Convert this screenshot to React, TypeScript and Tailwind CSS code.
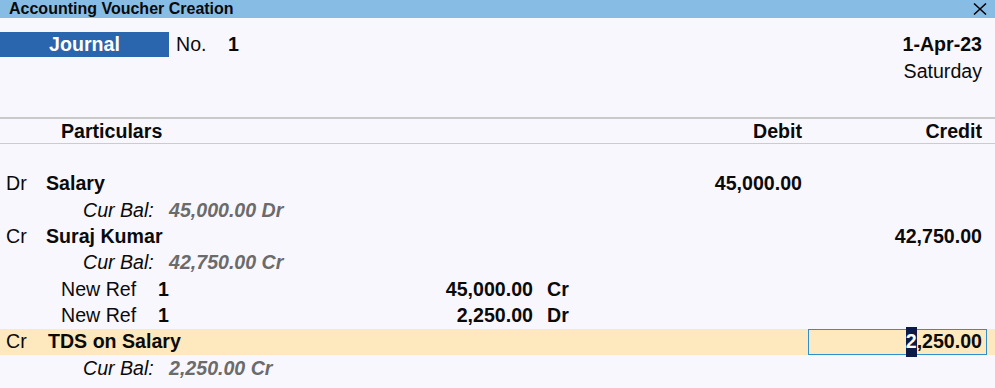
import React from 'react';

const font = { fontFamily: '"Liberation Sans", Arial, sans-serif' };

const Row: React.FC<{ className?: string; children: React.ReactNode }> = ({ className = '', children }) => (
  <div className={`flex items-center h-[26.3px] ${className}`}>{children}</div>
);

const LedgerRow: React.FC<{ side: string; name: string; debit?: string; credit?: string }> = ({ side, name, debit, credit }) => (
  <Row>
    <span className="w-[46px] pl-[6px]">{side}</span>
    <span className="font-bold w-[574px]">{name}</span>
    <span className="w-[182px] text-right font-bold">{debit}</span>
    <span className="w-[180px] text-right font-bold">{credit}</span>
  </Row>
);

const CurBal: React.FC<{ value: string }> = ({ value }) => (
  <Row>
    <span className="pl-[83px] w-[169px] italic">Cur Bal:</span>
    <span className="italic font-bold text-[#6b6b6b]">{value}</span>
  </Row>
);

const BillRow: React.FC<{ amount: string; side: string }> = ({ amount, side }) => (
  <Row>
    <span className="pl-[61px] w-[158px]">New Ref</span>
    <span className="font-bold">1</span>
    <span className="font-bold ml-auto w-[200px] text-right">{amount}</span>
    <span className="font-bold w-[462px] pl-[14px]">{side}</span>
  </Row>
);

export default function App() {
  return (
    <div className="w-[995px] h-[388px] bg-[#f9f7fe] text-[#0a0a0a] text-[19.6px] overflow-hidden" style={font}>
      <div className="h-[18px] bg-[#87bce5] flex items-center justify-between pl-[9px] pr-[8px]">
        <span className="text-[16px] font-bold leading-none">Accounting Voucher Creation</span>
        <svg width="14" height="12" viewBox="0 0 14 12">
          <path d="M1 0.5 L13 11.5 M13 0.5 L1 11.5" stroke="#000" strokeWidth="1.5" />
        </svg>
      </div>

      <div className="h-[99px] flex justify-between pt-[14px] pr-[13px]">
        <div className="flex items-center h-[25px]">
          <div className="w-[169px] h-[25px] bg-[#2a66ae] text-white font-bold flex items-center justify-center">Journal</div>
          <span className="ml-[7px] w-[52px]">No.</span>
          <span className="font-bold">1</span>
        </div>
        <div className="flex flex-col items-end">
          <div className="h-[26px] flex items-center font-bold">1-Apr-23</div>
          <div className="h-[28px] flex items-center">Saturday</div>
        </div>
      </div>

      <div className="h-[2px] bg-[#c9c9c9]" />
      <div className="h-[25px] flex items-center font-bold border-b border-[#cccccc] pr-[13px] pt-[1px]">
        <span className="pl-[61px] flex-1">Particulars</span>
        <span className="w-[182px] text-right">Debit</span>
        <span className="w-[180px] text-right">Credit</span>
      </div>
      <div className="h-[27px]" />

      <LedgerRow side="Dr" name="Salary" debit="45,000.00" />
      <CurBal value="45,000.00 Dr" />
      <LedgerRow side="Cr" name="Suraj Kumar" credit="42,750.00" />
      <CurBal value="42,750.00 Cr" />
      <BillRow amount="45,000.00" side="Cr" />
      <BillRow amount="2,250.00" side="Dr" />

      <Row className="bg-[#fde9bd]">
        <span className="w-[48px] pl-[6px]">Cr</span>
        <span className="font-bold w-[760px]">TDS on Salary</span>
        <span className="w-[179px] h-[26px] border border-[#2b8fd1] flex items-center justify-end pr-[4px] font-bold">
          <span className="bg-[#0b1a48] text-white">2</span>,250.00
        </span>
      </Row>
      <CurBal value="2,250.00 Cr" />
    </div>
  );
}
